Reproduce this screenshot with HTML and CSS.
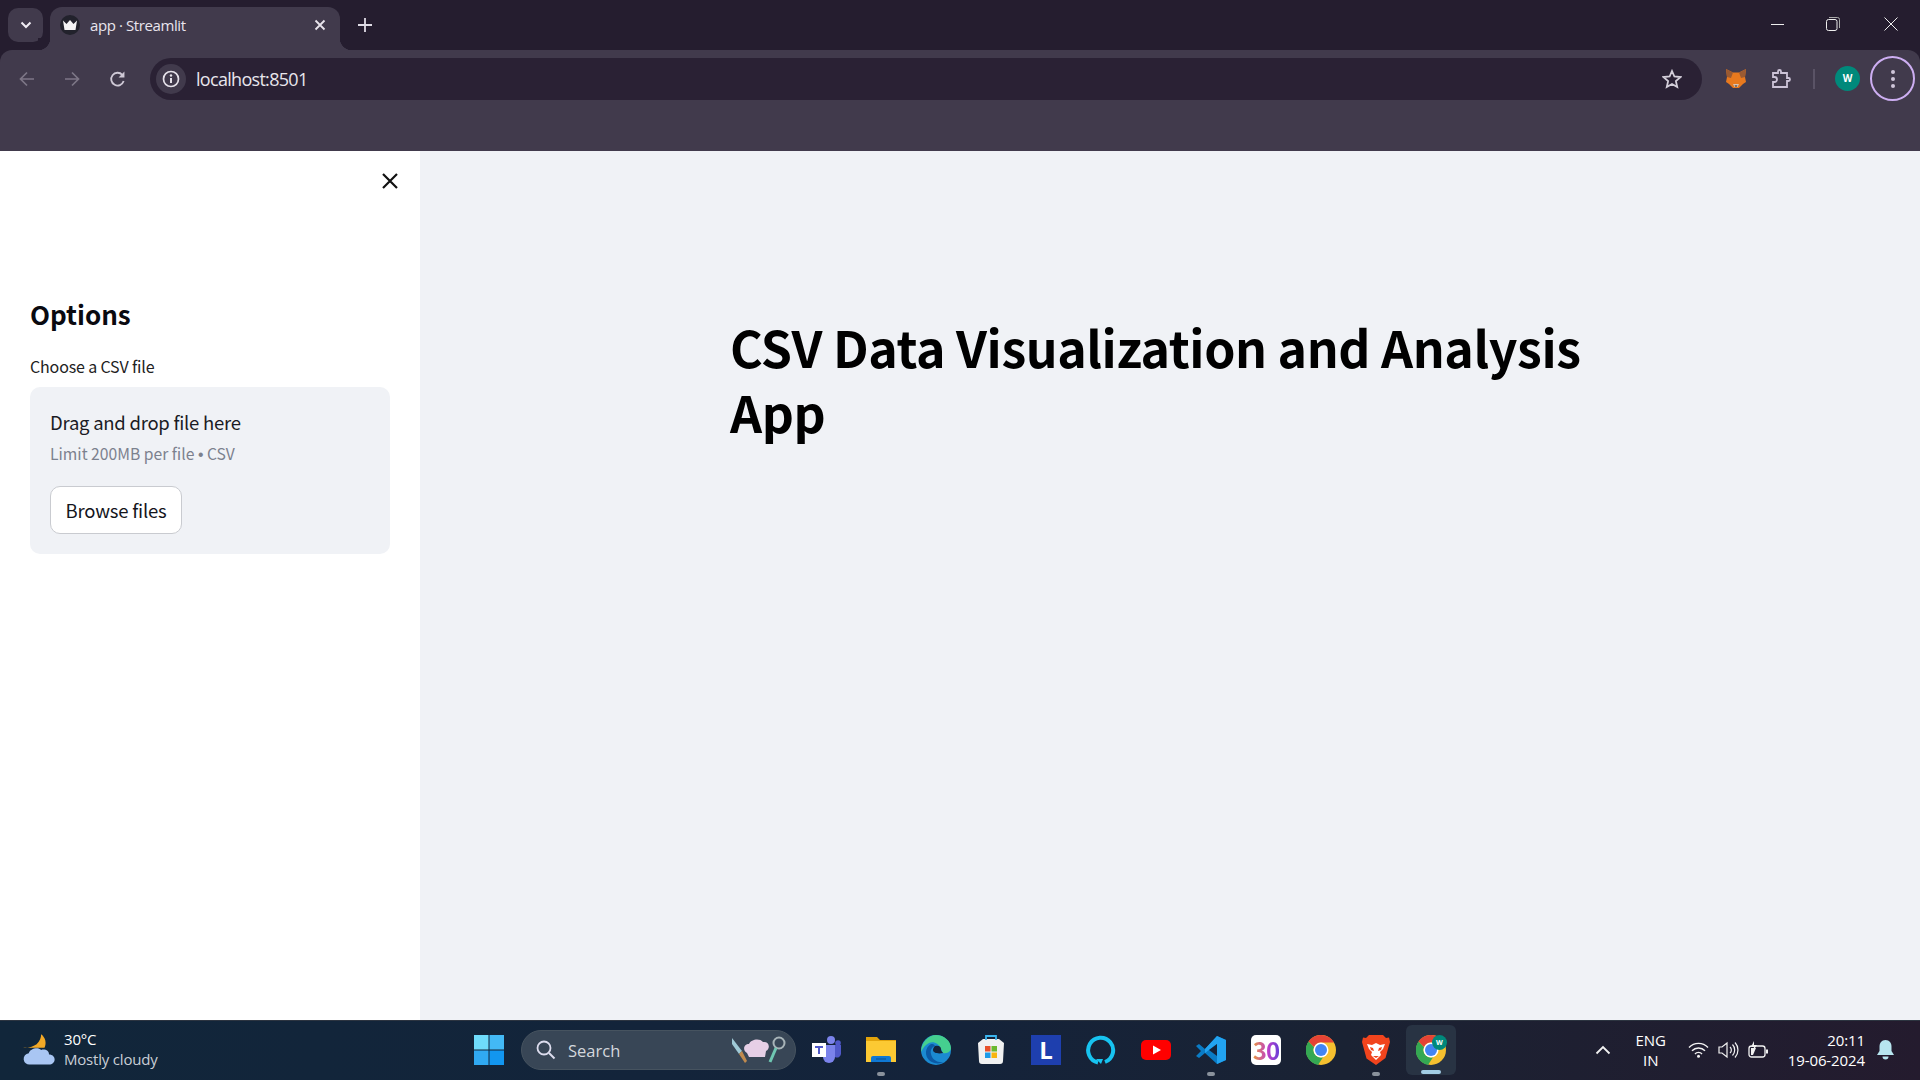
FILE: index.html
```html
<!DOCTYPE html>
<html lang="en">
<head>
    <meta charset="UTF-8">
    <title>app · Streamlit</title>
    <link rel="stylesheet" href="styles.css">
</head>
<body>
    <div class="tabstrip">
        <div class="tab-search">
            <svg width="14" height="14" viewBox="0 0 14 14"><path d="M2.5 4.5 7 9l4.5-4.5" fill="none" stroke="#f0ecf4" stroke-width="2"/></svg>
        </div>
        <div class="tab">
            <span class="favicon">
                <svg width="16" height="12" viewBox="0 0 16 12"><path d="M1 1.5 4.5 5 8 1l3.5 4L15 1.5 13.5 11h-11z" fill="#f4f4f4"/></svg>
            </span>
            <span class="tab-title">app · Streamlit</span>
            <svg class="tab-close" width="12" height="12" viewBox="0 0 12 12"><path d="M1.5 1.5l9 9m0-9-9 9" stroke="#e8e4ec" stroke-width="1.8"/></svg>
        </div>
        <svg class="new-tab" width="14" height="14" viewBox="0 0 14 14"><path d="M7 0v14M0 7h14" stroke="#e0dce6" stroke-width="1.8"/></svg>
        <div class="window-controls">
            <svg width="14" height="14" viewBox="0 0 14 14"><path d="M0 7.500h13" stroke="#eee" stroke-width="1"/></svg>
            <svg width="14" height="14" viewBox="0 0 14 14"><rect x=".5" y="2.500" width="10.500" height="11" rx="2" fill="none" stroke="#eee"/><path d="M3 .5h8.500a2 2 0 0 1 2 2V11" fill="none" stroke="#aaa"/></svg>
            <svg width="14" height="14" viewBox="0 0 14 14"><path d="M.5.5l13 13m0-13-13 13" stroke="#eee" stroke-width="1"/></svg>
        </div>
    </div>

    <div class="toolbar">
        <div class="toolbar-row">
            <div class="nav-buttons">
                <svg width="16" height="16" viewBox="0 0 16 16"><path d="M15 8H2m6-6.500L1.500 8 8 14.500" fill="none" stroke="#7d7686" stroke-width="1.700"/></svg>
                <svg width="16" height="16" viewBox="0 0 16 16"><path d="M1 8h13M8 1.500 14.500 8 8 14.500" fill="none" stroke="#7d7686" stroke-width="1.700"/></svg>
                <svg width="17" height="17" viewBox="0 0 16 16"><path d="M13.800 9.500A6 6 0 1 1 12.500 3.600" fill="none" stroke="#cfc9d6" stroke-width="1.700"/><path d="M14.500 0.500v5.500H9z" fill="#cfc9d6"/></svg>
            </div>
            <div class="omnibox">
                <span class="site-info">
                    <svg width="18" height="18" viewBox="0 0 18 18"><circle cx="9" cy="9" r="7.500" fill="none" stroke="#e6e2ea" stroke-width="1.700"/><path d="M9 8v5" stroke="#e6e2ea" stroke-width="2"/><circle cx="9" cy="5.500" r="1.200" fill="#e6e2ea"/></svg>
                </span>
                <span class="url">localhost:8501</span>
                <svg class="star" width="20" height="20" viewBox="0 0 20 20"><path d="M10 2l2.400 5.500 6 .6-4.500 4 1.300 5.900L10 15l-5.200 3 1.300-5.900-4.500-4 6-.6z" fill="none" stroke="#d4cfda" stroke-width="1.800"/></svg>
            </div>
            <div class="toolbar-icons">
                <svg class="fox" width="20" height="20" viewBox="0 0 20 20">
                    <path d="M0 0l7 3.500h6L20 0l-1 8 1 5-3 2-4 4H7l-4-4-3-2 1-5z" fill="#e8791e"/>
                    <path d="M0 0l7 3.500L5 9 1 8zM20 0l-7 3.500L15 9l4-1z" fill="#9a5a32"/>
                    <path d="M7 15h6l-1.500 3h-3z" fill="#d8c4b4"/>
                    <path d="M8.500 16.500h3L10 18z" fill="#2a2420"/>
                </svg>
                <svg class="puzzle" width="20" height="20" viewBox="0 0 20 20"><path d="M2 4h5V2.500a1.500 1.500 0 0 1 3 0V4h6v5h1.500a1.500 1.500 0 0 1 0 3H16v6H2v-5h1.500a2.500 2.500 0 0 0 0-5H2z" fill="none" stroke="#cdc4d8" stroke-width="1.800"/></svg>
                <span class="divider"></span>
                <span class="avatar">W</span>
                <span class="menu-ring">
                    <i></i><i></i><i></i>
                </span>
            </div>
        </div>
    </div>

    <div class="viewport">
        <aside class="sidebar">
            <div class="sidebar-head">
                <svg width="16" height="16" viewBox="0 0 16 16"><path d="M1 1l14 14m0-14L1 15" stroke="#111" stroke-width="2.200"/></svg>
            </div>
            <h2 class="sidebar-title">Options</h2>
            <label class="uploader-label">Choose a CSV file</label>
            <div class="dropzone">
                <div class="drop-text">Drag and drop file here</div>
                <div class="drop-limit">Limit 200MB per file <span class="dot">•</span> CSV</div>
                <button class="browse">Browse files</button>
            </div>
        </aside>
        <main class="main">
            <h1 class="title">CSV Data Visualization and Analysis App</h1>
        </main>
    </div>

    <footer class="taskbar">
        <div class="weather">
            <svg class="weather-icon" width="36" height="36" viewBox="0 0 32 32">
                <path d="M17 1c4 3 5 8 3 12H1c4 1 9-1 12-3 3-3 4-6 4-9z" fill="#f3a926"/>
                <path d="M7 28a5 5 0 0 1-1-10c1-4 8-6 11-3 4-1 7 1 7 4 3 0 5 2 5 4.500S27 28 24 28z" fill="#a9c6f3"/>
            </svg>
            <div class="weather-text">
                <div class="temp">30°C</div>
                <div class="cond">Mostly cloudy</div>
            </div>
        </div>
        <div class="task-center">
            <svg class="app start" width="30" height="30" viewBox="0 0 30 30">
                <rect width="14.500" height="14.500" fill="#6fdcfb"/><rect x="15.500" width="14.500" height="14.500" fill="#43b9f5"/>
                <rect y="15.500" width="14.500" height="14.500" fill="#30a9f2"/><rect x="15.500" y="15.500" width="14.500" height="14.500" fill="#1296f0"/>
            </svg>
            <div class="search-pill">
                <svg width="20" height="20" viewBox="0 0 20 20"><circle cx="8" cy="8" r="6.500" fill="none" stroke="#dde" stroke-width="1.800"/><path d="M13 13l5.500 5.500" stroke="#dde" stroke-width="2"/></svg>
                <span class="search-text">Search</span>
                <svg class="search-art" width="56" height="30" viewBox="0 0 56 30">
                    <path d="M1 3l10 13-3 3L1 9z" fill="#9fc9d6"/><path d="M8 19l3-3 5 10-2 2z" fill="#c08a4e"/>
                    <path d="M16 18c-5-3-3-9 2-9 2-5 11-6 14-2 6-1 8 6 3 9l-1 6H18z" fill="#e6cfe6"/>
                    <circle cx="48" cy="8" r="5.500" fill="none" stroke="#a8b4b8" stroke-width="2"/><path d="M45 13 39 27" stroke="#6fc7b2" stroke-width="3"/>
                </svg>
            </div>
            <div class="apps">
                <span class="app">
                    <svg width="30" height="30" viewBox="0 0 30 30">
                        <circle cx="20" cy="5" r="4" fill="#7b83eb"/><circle cx="27" cy="8" r="2.800" fill="#5059c9"/>
                        <path d="M12 10h12v12a6 6 0 0 1-12 0z" fill="#7b83eb"/><path d="M24 10h6v9a4 4 0 0 1-6 3z" fill="#5059c9"/>
                        <rect x="1" y="8" width="14" height="14" fill="#fff"/><path d="M4 11h8v2H9v6H7v-6H4z" fill="#5059c9"/>
                    </svg>
                </span>
                <span class="app running">
                    <svg width="30" height="30" viewBox="0 0 30 30">
                        <path d="M0 2h11l3 3h16v22H0z" fill="#e3a40b"/><path d="M0 6h30v21H0z" fill="#fcc933"/>
                        <path d="M5 27v-4a2 2 0 0 1 2-2h16a2 2 0 0 1 2 2v4z" fill="#0f78d4"/><path d="M10 24h10" stroke="#0a4f8f" stroke-width="1"/>
                    </svg>
                </span>
                <span class="app">
                    <svg width="30" height="30" viewBox="0 0 30 30">
                        <circle cx="15" cy="15" r="15" fill="#1b8ad1"/>
                        <path d="M15 0c8 0 15 6 15 13 0 3-3 6-8 5-1-1-1-3-2-4C18 8 12 6 8 8 4 10 2 13 0 17 0 7 8 0 15 0z" fill="#45cf8f"/>
                        <path d="M10 9C4 12 3 21 9 26c4 3 10 3 14 1-6 1-12-2-13-8-1-4 1-7 4-8-1-2-2-2-4-2z" fill="#0c59a4"/>
                        <path d="M14 11c4-1 6 1 6 3 0 3 3 4 2 4-5 1-10 0-10-3 0-2 1-3 2-4z" fill="#14233a"/>
                    </svg>
                </span>
                <span class="app">
                    <svg width="30" height="30" viewBox="0 0 30 30">
                        <path d="M7 4h16l5 4H2z M2 8h26l-1 18a3 3 0 0 1-3 3H6a3 3 0 0 1-3-3z" fill="#f1f1f1"/><path d="M10 5V1h10v4" fill="none" stroke="#3bb6f0" stroke-width="1.800"/>
                        <rect x="9" y="11" width="5.500" height="5.500" fill="#e8512a"/><rect x="15.500" y="11" width="5.500" height="5.500" fill="#6ab82e"/>
                        <rect x="9" y="17.500" width="5.500" height="5.500" fill="#1c9be8"/><rect x="15.500" y="17.500" width="5.500" height="5.500" fill="#f8b50f"/>
                    </svg>
                </span>
                <span class="app tile-l">L</span>
                <span class="app">
                    <svg width="30" height="30" viewBox="0 0 30 30"><path d="M12 27.500A12.500 12.500 0 1 1 19 27" fill="none" stroke="#17c3f0" stroke-width="4"/><path d="M10 24l5 5 2-5z" fill="#17c3f0"/></svg>
                </span>
                <span class="app">
                    <svg width="30" height="30" viewBox="0 0 30 30"><rect y="5" width="30" height="20" rx="5" fill="#f00"/><path d="M12 10.500v9l8-4.500z" fill="#fff"/></svg>
                </span>
                <span class="app running">
                    <svg width="30" height="30" viewBox="0 0 30 30">
                        <path d="M21 1 9 14 3 9 0 11l5 5-5 5 3 2 6-5 12 11 9-4V5z" fill="#0a7cc6"/>
                        <path d="M21 1l9 4v20l-9 4V9l-12 9V14z" fill="#22a3f0"/><path d="M21 9v12l-8-6z" fill="#14233a"/>
                    </svg>
                </span>
                <span class="app tile-30"><span class="tile-30-text">30</span></span>
                <span class="app">
                    <svg width="30" height="30" viewBox="0 0 30 30">
                        <circle cx="15" cy="15" r="15" fill="#f5c02f"/>
                        <path d="M15 0a15 15 0 0 1 13 7.500H15a7.500 7.500 0 0 0-7 4.800L2.500 6.500A15 15 0 0 1 15 0z" fill="#e54335"/>
                        <path d="M2.500 6.500 8 12.300a7.500 7.500 0 0 0 9 9.900L12 30A15 15 0 0 1 2.500 6.500z" fill="#34a853"/>
                        <circle cx="15" cy="15" r="7.500" fill="#fff"/><circle cx="15" cy="15" r="6" fill="#4285f4"/>
                    </svg>
                </span>
                <span class="app running">
                    <svg width="30" height="30" viewBox="0 0 30 30">
                        <path d="M8 0h14l3 3 3-.5 1 4.500-1.500 5-3 11L15 30l-9.500-6.500-3-11L1 7l1-4.500L5 3z" fill="#f1441d"/>
                        <path d="M6 9l5 1 4-2 4 2 5-1-2 5-3 3 1 3-5 5-5-5 1-3-3-3z" fill="#fff"/>
                        <path d="M9 12l3 1 1 3-3-1zM21 12l-3 1-1 3 3-1zM12 21h6l-3 2z" fill="#f1441d"/>
                    </svg>
                </span>
                <span class="app active">
                    <svg width="30" height="30" viewBox="0 0 30 30">
                        <circle cx="15" cy="15" r="15" fill="#f5c02f"/>
                        <path d="M15 0a15 15 0 0 1 13 7.500H15a7.500 7.500 0 0 0-7 4.800L2.500 6.500A15 15 0 0 1 15 0z" fill="#e54335"/>
                        <path d="M2.500 6.500 8 12.300a7.500 7.500 0 0 0 9 9.900L12 30A15 15 0 0 1 2.500 6.500z" fill="#34a853"/>
                        <circle cx="15" cy="15" r="7.500" fill="#fff"/><circle cx="15" cy="15" r="6" fill="#4285f4"/>
                    </svg>
                    <span class="app-badge">W</span>
                </span>
            </div>
        </div>
        <div class="tray">
            <svg class="tray-up" width="16" height="10" viewBox="0 0 16 10"><path d="M1.500 8.500 8 2l6.500 6.500" fill="none" stroke="#f2f2f2" stroke-width="1.800"/></svg>
            <div class="lang">ENG<br>IN</div>
            <div class="tray-icons">
                <svg width="21" height="16" viewBox="0 0 21 16"><path d="M1 5.500a13 13 0 0 1 19 0M4 8.800a9 9 0 0 1 13 0M7 12a4.500 4.500 0 0 1 7 0" fill="none" stroke="#f2f2f2" stroke-width="1.400"/><circle cx="10.500" cy="14.300" r="1.500" fill="#f2f2f2"/></svg>
                <svg width="21" height="18" viewBox="0 0 21 18"><path d="M1 6v6h3l5 4V2L4 6z" fill="none" stroke="#f2f2f2" stroke-width="1.200"/><path d="M12 6a4 4 0 0 1 0 6M14.500 3.500a8 8 0 0 1 0 11M17 1.500a11 11 0 0 1 0 15" fill="none" stroke="#f2f2f2" stroke-width="1.200"/></svg>
                <svg width="21" height="18" viewBox="0 0 21 18"><rect x="1" y="5" width="16" height="11" rx="2.500" fill="none" stroke="#f2f2f2" stroke-width="1.300"/><path d="M3 14V7h5l-3 7z" fill="#f2f2f2"/><rect x="18" y="8.500" width="2" height="4" fill="#f2f2f2"/><path d="M6 0 3 6h3L5 10l4-6H6z" fill="#f2f2f2"/></svg>
            </div>
            <div class="clock">20:11<br>19-06-2024</div>
            <svg class="bell" width="17" height="20" viewBox="0 0 17 20"><path d="M8.500 0C4.500 0 2.500 3 2.500 6.500V11L0 15h17l-2.500-4V6.500C14.500 3 12.500 0 8.500 0z" fill="#b7e5ef"/><path d="M5.500 16.500h6a3 3 0 0 1-6 0z" fill="#b7e5ef"/></svg>
        </div>
    </footer>
</body>
</html>
```

FILE: styles.css
```css
* {
    box-sizing: border-box;
}
html, body {
    height: 100%;
}
body {
    margin: 0;
    display: flex;
    flex-direction: column;
    overflow: hidden;
    background: #251d2f;
    font-family: "Noto Sans CJK SC", "Noto Sans", sans-serif;
}
svg {
    display: block;
    flex: none;
}

/* browser chrome */
.tabstrip {
    height: 50px;
    flex: none;
    display: flex;
    align-items: flex-start;
    background: #251d2f;
    padding: 8px 0 0 8px;
}
.tab-search {
    width: 35px;
    height: 34px;
    border-radius: 10px;
    background: #413a4c;
    display: flex;
    align-items: center;
    justify-content: center;
}
.tab {
    position: relative;
    width: 290px;
    height: 43px;
    margin: -1px 0 0 7px;
    padding: 0 0 8px 10px;
    border-radius: 12px 12px 0 0;
    background: #413a4c;
    display: flex;
    align-items: center;
    color: #e9e5ee;
    font: 15px "Open Sans", sans-serif;
}
.tab::before, .tab::after {
    content: "";
    position: absolute;
    bottom: 0;
    width: 12px;
    height: 12px;
}
.tab::before {
    left: -12px;
    background: radial-gradient(circle at 0 0, #251d2f 12px, #413a4c 12.5px);
}
.tab::after {
    right: -12px;
    background: radial-gradient(circle at 100% 0, #251d2f 12px, #413a4c 12.5px);
}
.favicon {
    width: 20px;
    height: 20px;
    border-radius: 50%;
    background: #22222c;
    display: flex;
    align-items: center;
    justify-content: center;
}
.tab-title {
    margin-left: 10px;
    flex: 1;
    letter-spacing: -0.4px;
}
.tab-close {
    margin-right: 14px;
}
.new-tab {
    margin: 10px 0 0 18px;
}
.window-controls {
    margin-left: auto;
    display: flex;
    gap: 44px;
    margin-top: 9px;
    padding-right: 22px;
}
.window-controls svg:first-child {
    margin-right: -3px;
}
.toolbar {
    height: 101px;
    flex: none;
    background: #413a4c;
    border-radius: 12px 12px 0 0;
    padding-top: 8px;
}
.toolbar-row {
    height: 42px;
    display: flex;
    align-items: center;
}
.nav-buttons {
    width: 150px;
    padding: 0 0 0 19px;
    display: flex;
    align-items: center;
    gap: 29px;
}
.omnibox {
    width: 1552px;
    height: 42px;
    border-radius: 21px;
    background: #2a2134;
    display: flex;
    align-items: center;
    padding: 0 20px 0 6px;
}
.site-info {
    width: 30px;
    height: 30px;
    border-radius: 50%;
    background: #413a4c;
    display: flex;
    align-items: center;
    justify-content: center;
}
.url {
    margin-left: 10px;
    color: #e8e6ec;
    font: 18px "Open Sans", sans-serif;
    letter-spacing: -0.7px;
}
.star {
    margin-left: auto;
}
.toolbar-icons {
    flex: 1;
    display: flex;
    align-items: center;
    padding-left: 24px;
}
.puzzle {
    margin-left: 25px;
}
.divider {
    width: 2px;
    height: 20px;
    margin-left: 22px;
    background: #5a5366;
}
.avatar {
    width: 25px;
    height: 25px;
    margin-left: 20px;
    margin-top: -1px;
    border-radius: 50%;
    background: #00897b;
    color: #fff;
    font: bold 10px/25px "Open Sans", sans-serif;
    text-align: center;
}
.menu-ring {
    width: 45px;
    height: 45px;
    margin-left: 10px;
    margin-top: -1px;
    border: 2px solid #cdaef2;
    border-radius: 50%;
    display: flex;
    flex-direction: column;
    align-items: center;
    justify-content: center;
    gap: 3px;
}
.menu-ring i {
    width: 4px;
    height: 4px;
    border-radius: 50%;
    background: #cfc6da;
}

/* streamlit page */
.viewport {
    flex: 1;
    display: flex;
    min-height: 0;
}
.sidebar {
    width: 420px;
    flex: none;
    background: #fff;
    padding: 0 30px;
    color: #111;
}
.sidebar-head {
    height: 60px;
    display: flex;
    align-items: flex-end;
    justify-content: flex-end;
    margin-right: -8px;
    padding-bottom: 22px;
}
.sidebar-title {
    margin: 81px 0 0;
    font-size: 26px;
    line-height: 44px;
    font-weight: 600;
    color: #0a0a10;
}
.uploader-label {
    display: block;
    margin-top: 18px;
    font-size: 16px;
    line-height: 25px;
    letter-spacing: -0.15px;
    color: #222;
}
.dropzone {
    height: 167px;
    margin-top: 8px;
    padding: 19px 20px;
    background: #f0f2f6;
    border-radius: 10px;
}
.drop-text {
    font-size: 18.5px;
    line-height: 32px;
    letter-spacing: -0.25px;
    color: #1a1b24;
}
.drop-limit {
    margin-top: 2px;
    font-size: 15.700px;
    line-height: 28px;
    color: #7c818e;
}
.dot {
    font-family: "Liberation Sans", sans-serif;
}
.browse {
    display: block;
    width: 132px;
    height: 48px;
    margin-top: 17px;
    padding: 0;
    background: #fff;
    border: 1px solid #c9cbd0;
    border-radius: 10px;
    font: 18.5px "Noto Sans CJK SC", sans-serif;
    letter-spacing: -0.2px;
    color: #14151c;
}
.main {
    flex: 1;
    background: #f0f2f6;
    padding: 163px 0 0 310px;
}
.title {
    width: 900px;
    margin: 0;
    font-size: 50px;
    line-height: 65px;
    font-weight: 700;
    letter-spacing: -0.42px;
    color: #000;
}

/* windows taskbar */
.taskbar {
    height: 60px;
    flex: none;
    display: flex;
    align-items: center;
    position: relative;
    color: #fff;
    border-top: 1px solid #2c3440;
    background: linear-gradient(90deg, #11263a, #14233a 50%, #1a2233 70%, #241b2e);
    font-family: "Open Sans", sans-serif;
}
.weather {
    width: 474px;
    flex: none;
    padding-left: 22px;
    display: flex;
    align-items: center;
    gap: 6px;
}
.weather-text {
    margin-top: -4px;
    font-size: 15px;
    line-height: 20px;
    letter-spacing: -0.2px;
}
.cond {
    color: #c9ced6;
}
.task-center {
    display: flex;
    align-items: center;
    margin-top: -1px;
}
.search-pill {
    width: 275px;
    height: 40px;
    margin-left: 17px;
    border-radius: 20px;
    background: #384656;
    border: 1px solid #46535f;
    display: flex;
    align-items: center;
    padding: 0 8px 0 14px;
    color: #d4d8dd;
    font-size: 16.500px;
}
.search-text {
    margin-left: 12px;
}
.search-art {
    margin-left: auto;
}
.apps {
    display: flex;
    gap: 25px;
    margin-left: 15px;
}
.app {
    width: 30px;
    height: 30px;
    flex: none;
    position: relative;
    display: block;
}
.app.running::after, .app.active::after {
    content: "";
    position: absolute;
    left: 11px;
    bottom: -11px;
    width: 8px;
    height: 4px;
    border-radius: 2px;
    background: #8a929c;
}
.app.active::before {
    content: "";
    position: absolute;
    inset: -10px;
    border-radius: 6px;
    background: #283343;
}
.app.active svg {
    position: relative;
}
.app.active::after {
    left: 5px;
    width: 20px;
    background: #a2cde4;
    bottom: -9px;
}
.app-badge {
    position: absolute;
    top: 0;
    right: -1px;
    width: 15px;
    height: 15px;
    border-radius: 50%;
    background: #00897b;
    font: bold 7px/15px "Open Sans", sans-serif;
    text-align: center;
}
.tile-l {
    background: #1e3fae;
    color: #fff;
    font: bold 24px/30px "Open Sans", sans-serif;
    text-align: center;
}
.tile-30 {
    background: #fff;
    border-radius: 5px;
    font: bold 24px/30px "Noto Sans CJK SC", sans-serif;
    letter-spacing: -1px;
    text-align: center;
}
.tile-30-text {
    background: linear-gradient(90deg, #e8963c, #c040c8 55%, #6a3fd8);
    -webkit-background-clip: text;
    background-clip: text;
    color: transparent;
}
.tray {
    margin-left: auto;
    display: flex;
    align-items: center;
    margin-top: -2px;
    font-size: 15px;
    line-height: 20px;
}
.tray-up {
    margin-right: 22px;
}
.lang {
    width: 36px;
    text-align: center;
    margin-right: 19px;
}
.tray-icons {
    display: flex;
    align-items: center;
    gap: 9px;
}
.clock {
    margin-left: 19px;
    text-align: right;
    letter-spacing: -0.1px;
}
.bell {
    margin: 0 26px 0 12px;
}
```
